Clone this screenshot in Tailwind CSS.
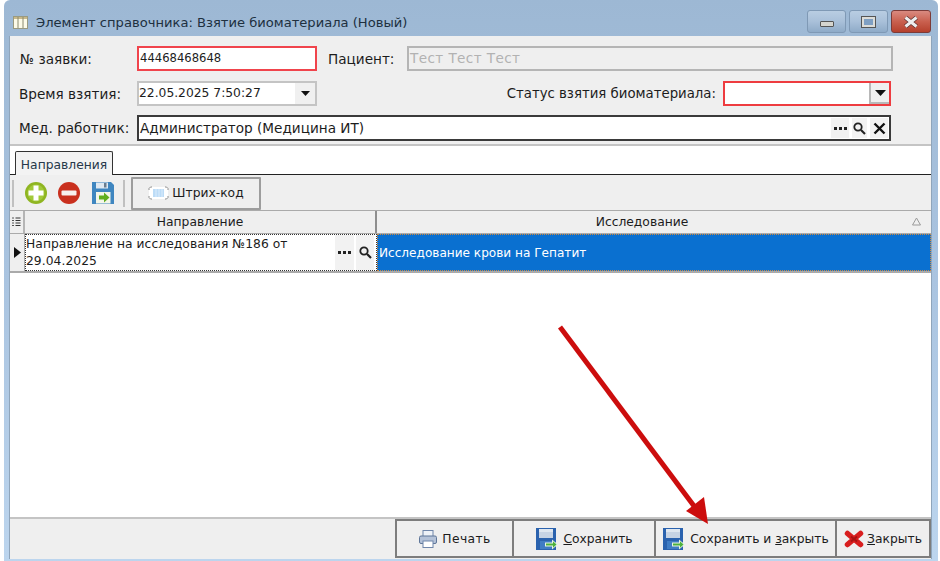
<!DOCTYPE html>
<html lang="en">
<head>
<meta charset="UTF-8">
<title>Взятие биоматериала</title>
<script src="https://cdn.jsdelivr.net/npm/@tailwindcss/browser@4"></script>
</head>
<body class="w-[940px] h-[561px] overflow-hidden bg-white font-['DejaVu_Sans',sans-serif] text-[13.6px] text-[#1c1c1c]">
<div class="relative w-[940px] h-[561px]">
  <div class="absolute left-[4px] top-0 w-[934px] h-[561px] flex flex-col bg-gradient-to-b from-[#9db8d4] via-[#aac4e0] to-[#bcd5ee] pl-[5px] pr-[6px] pb-[2px] rounded-t-[6px]">
    <!-- title bar -->
    <div class="h-[36px] flex shrink-0 items-start justify-between pt-[10px]">
      <div class="flex items-center gap-[8px] pl-[4px] h-[24px]">
        <svg width="15" height="15" viewBox="0 0 15 15"><rect x="0.5" y="1.500" width="14" height="12" fill="#fdfbe8" stroke="#9a9a80"/><rect x="1" y="2" width="13" height="2" fill="#c9b98a"/><path d="M5 2v11M10 2v11" stroke="#8a8a70"/></svg>
        <span class="text-[13.1px] text-[#20303f] pt-[1px]">Элемент справочника: Взятие биоматериала (Новый)</span>
      </div>
      <div class="flex gap-[3px] mr-[1px]">
        <div class="w-[39px] h-[23px] rounded-[3px] border border-[#7f99b5] bg-gradient-to-b from-[#b9cde2] via-[#a9c0d9] to-[#8fabc8] flex items-end justify-center pb-[5px]"><div class="w-[14px] h-[6px] bg-[#d5d5cf] border border-[#555] rounded-[1px]"></div></div>
        <div class="w-[39px] h-[23px] rounded-[3px] border border-[#7f99b5] bg-gradient-to-b from-[#b9cde2] via-[#a9c0d9] to-[#8fabc8] flex items-center justify-center"><div class="w-[13px] h-[10px] bg-[#7f9fc2] border-[2px] border-[#dcdcd8] outline outline-1 outline-[#555]"></div></div>
        <div class="w-[40px] h-[23px] rounded-[3px] border border-[#7c3b38] bg-gradient-to-b from-[#d98a80] via-[#c9604f] to-[#b5402c] flex items-center justify-center">
          <svg width="16" height="12" viewBox="0 0 16 12"><path d="M2.500 1.500L13.500 10.500M13.500 1.500L2.500 10.500" stroke="#5a3030" stroke-width="4.500"/><path d="M2.500 1.500L13.500 10.500M13.500 1.500L2.500 10.500" stroke="#eee" stroke-width="3"/></svg>
        </div>
      </div>
    </div>

    <!-- form -->
    <div class="flex-1 flex flex-col border-l border-r border-[#8fa5bb] min-h-0 bg-white">
      <div class="h-[110px] shrink-0 bg-[#efefef] border-b-[2px] border-[#c4c4c4] pt-[10px] pl-[10px] pr-[38px]">
        <div class="flex items-center h-[25px]">
          <span class="w-[117px] pt-[1px]">№ заявки:</span>
          <div class="w-[180px] h-[25px] bg-white border-[2px] border-[#f0444c] flex items-center pl-[1px] text-[11.600px]">44468468648</div>
          <span class="ml-[11px] w-[79px] pt-[1px]">Пациент:</span>
          <div class="flex-1 h-[25px] bg-[#efefef] border-[2px] border-[#b5b5b5] flex items-center pl-[1px] text-[13.600px] text-[#b2b2b2] tracking-[0.4px]">Тест Тест Тест</div>
        </div>
        <div class="flex items-center h-[25px] mt-[10px]">
          <span class="w-[117px] ml-[-1px] mr-[1px] pt-[1px]">Время взятия:</span>
          <div class="w-[180px] h-[25px] bg-white border-[2px] border-[#c4c4c4] flex items-center justify-between text-[12.300px]">22.05.2025 7:50:27
            <span class="w-[20px] h-[21px] bg-[#f0f0f0] flex items-center justify-center"><svg width="9" height="5" viewBox="0 0 9 5"><path d="M0 0h9L4.500 5z" fill="#111"/></svg></span>
          </div>
          <span class="ml-auto mr-[7px] pt-[1px] text-[13.300px]">Статус взятия биоматериала:</span>
          <div class="w-[168px] h-[25px] bg-white border-[2px] border-[#ee3c40] flex items-center justify-end mr-[2px]">
            <span class="w-[20px] h-[21px] bg-[#efefef] border-l-[2px] border-b-[2px] border-[#b8b8b8] flex items-center justify-center"><svg width="11" height="6" viewBox="0 0 11 6"><path d="M0 0h11L5.500 6z" fill="#111"/></svg></span>
          </div>
        </div>
        <div class="flex items-center h-[26px] mt-[9px]">
          <span class="w-[117px] ml-[-1px] mr-[1px]">Мед. работник:</span>
          <div class="w-[754px] h-[26px] bg-white border-[2px] border-[#3a3a3a] flex items-center justify-between pl-[1px]">Администратор (Медицина ИТ)
            <span class="flex gap-[3px] pr-[1px]">
              <span class="w-[18px] h-[20px] bg-[#f2f2f2] flex items-center justify-center"><svg width="13" height="3" viewBox="0 0 13 3"><path d="M0 0h3v3H0zM5 0h3v3H5zM10 0h3v3h-3z" fill="#222"/></svg></span>
              <span class="w-[15px] h-[20px] bg-[#f2f2f2] flex items-center justify-center"><svg width="13" height="13" viewBox="0 0 13 13"><circle cx="5" cy="5" r="3.700" fill="none" stroke="#222" stroke-width="1.800"/><path d="M8 8l4 4" stroke="#222" stroke-width="2.200"/></svg></span>
              <span class="w-[18px] h-[20px] bg-[#f2f2f2] flex items-center justify-center"><svg width="13" height="13" viewBox="0 0 13 13"><path d="M1.500 1.500l10 10M11.500 1.500l-10 10" stroke="#111" stroke-width="2.400"/></svg></span>
            </span>
          </div>
        </div>
      </div>

      <!-- tab strip -->
      <div class="h-[29px] shrink-0 bg-white border-b border-[#222] flex items-end pl-[5px]">
        <div class="w-[98px] h-[24px] mb-[-1px] pt-[3px] bg-[#f3f3f3] border border-b-0 border-[#333] rounded-t-[2px] text-[12.300px] text-[#26384a] flex items-center justify-center">Направления</div>
      </div>

      <!-- toolbar -->
      <div class="h-[35px] shrink-0 bg-[#efefef] flex items-center pl-[2px] pt-[1px]">
        <div class="w-[2px] h-[27px] bg-[#c0c0c0]"></div>
        <svg class="ml-[10px]" width="24" height="24" viewBox="0 0 24 24"><circle cx="12" cy="12" r="11" fill="#8fb521"/><circle cx="12" cy="12" r="8.500" fill="#a2c93a"/><path d="M9.500 4.500h5v5h5v5h-5v5h-5v-5h-5v-5h5z" fill="#fff"/></svg>
        <svg class="ml-[9px]" width="24" height="24" viewBox="0 0 24 24"><circle cx="12" cy="12" r="11" fill="#c9301e"/><rect x="4.500" y="9.500" width="15" height="5" rx="1" fill="#f7f0ee"/></svg>
        <svg class="ml-[10px]" width="24" height="24" viewBox="0 0 24 24"><path d="M1 1h19l3 3v19H1z" fill="#3f86c0"/><path d="M5 1.500h12v6H5z" fill="#dfe9f2"/><rect x="13" y="2" width="2.500" height="4.500" fill="#6a7d8f"/><path d="M5 11h14.500v11.500H5z" fill="#f4f6e8"/><path d="M8 14.500h5v-3l5.500 5-5.500 5v-3H8z" fill="#5fae1f"/></svg>
        <div class="ml-[8px] w-[2px] h-[27px] bg-[#c0c0c0]"></div>
        <div class="ml-[6px] w-[130px] h-[33px] border-[2px] border-[#9d9d9d] rounded-[1px] bg-[#efefef] flex items-center justify-center gap-[3px] text-[12.300px]">
          <svg width="21" height="14" viewBox="0 0 21 14"><rect x="1" y="1" width="19" height="12" rx="2" fill="#fff"/><rect x="5" y="3" width="11" height="8" fill="#bcdcf7"/><path d="M8 3v8M11 3v8M14 3v8" stroke="#dcecfb"/><path d="M1 4V2.500L2.500 1H4M17 1h1.500L20 2.500V4M20 10v1.500L18.500 13H17M4 13H2.500L1 11.500V10" fill="none" stroke="#8c8c8c"/></svg>
          Штрих-код
        </div>
      </div>

      <!-- grid -->
      <div class="flex-1 min-h-0 flex flex-col bg-white">
        <div class="h-[24px] shrink-0 flex bg-[#efefef] border-y-[1.500px] border-[#aaaaaa] text-[12.300px]">
          <div class="w-[15px] border-r-[2px] border-[#b5b5b5] flex items-center justify-center"><svg width="9" height="11" viewBox="0 0 9 11"><path d="M0 1h2M0 3.500h2M0 6h2M0 8.500h2" stroke="#555"/><path d="M3.500 1h5M3.500 3.500h5M3.500 6h5M3.500 8.500h5" stroke="#333"/></svg></div>
          <div class="w-[352px] border-r-[2px] border-[#8e8e8e] flex items-center justify-center pt-[1px]">Направление</div>
          <div class="relative flex-1 flex items-center justify-center pr-[24px] pt-[1px]">Исследование
            <svg class="absolute right-[10px] top-[6px]" width="9" height="9" viewBox="0 0 9 9"><path d="M4.500 1L8.500 8H.5z" fill="none" stroke="#9a9a9a"/></svg>
          </div>
        </div>
        <div class="h-[39px] shrink-0 flex border-b-[2px] border-[#aaaaaa] text-[12.300px]">
          <div class="w-[15px] bg-[#efefef] border-r border-[#aaa] flex items-center justify-center"><svg width="7" height="11" viewBox="0 0 7 11"><path d="M0 0l7 5.500L0 11z" fill="#111"/></svg></div>
          <div class="w-[352px] border border-dotted border-[#333] flex items-center justify-between">
            <span class="leading-[17px] w-[310px] tracking-[0.05px]">Направление на исследования №186 от 29.04.2025</span>
            <span class="flex gap-[2px] shrink-0 h-[35px] mr-[2px]">
              <span class="w-[19px] bg-[#f2f2f2] flex items-center justify-center"><svg width="13" height="3" viewBox="0 0 13 3"><path d="M0 0h3v3H0zM5 0h3v3H5zM10 0h3v3h-3z" fill="#222"/></svg></span>
              <span class="w-[18px] bg-[#f2f2f2] flex items-center justify-center"><svg width="13" height="13" viewBox="0 0 13 13"><circle cx="5" cy="5" r="3.700" fill="none" stroke="#222" stroke-width="1.800"/><path d="M8 8l4 4" stroke="#222" stroke-width="2.200"/></svg></span>
            </span>
          </div>
          <div class="flex-1 bg-[#0a70d0] border border-dotted border-[#d08a40] text-white flex items-center pl-[1px] pt-[1px] text-[12.100px]">Исследование крови на Гепатит</div>
        </div>
        <div class="flex-1"></div>
      </div>

      <!-- bottom bar -->
      <div class="h-[42px] shrink-0 bg-[#efefef] border-t-[2px] border-[#c4c4c4] flex justify-end text-[12.300px] pb-[1px]">
        <div class="w-[119px] border-[2px] border-[#7d7d7d] flex items-center justify-center gap-[4px] pt-[1px]">
          <svg width="20" height="20" viewBox="0 0 20 20"><rect x="5" y="1.500" width="10" height="6" fill="#eef2f8" stroke="#6f86aa"/><rect x="1.500" y="7" width="17" height="7.500" rx="1.500" fill="#b4c2d8" stroke="#5f7699"/><rect x="5" y="12" width="10" height="6.500" fill="#fff" stroke="#6f86aa"/></svg>
          <span class="tracking-[0.4px]">Печать</span>
        </div>
        <div class="w-[142px] border-[2px] border-l-0 border-[#7d7d7d] flex items-center justify-center gap-[4px] pt-[1px]">
          <svg width="24" height="24" viewBox="0 0 24 24"><path d="M1 1h20v22H1z" fill="#2a62ae"/><path d="M4 2h14v9H4z" fill="#c6d3e4"/><path d="M4 2h14v3H4z" fill="#dfe7f0"/><path d="M5 14h12v8H5z" fill="#3f7cc4"/><path d="M10 15.500h7v-3l6 5-6 5v-3h-7z" fill="#e8f4e2"/><path d="M11 16.500h7v-2.300l3.500 3.300-3.500 3.300v-2.300h-7z" fill="#4cb03c"/></svg>
          <span><u>С</u>охранить</span>
        </div>
        <div class="w-[181px] border-[2px] border-l-0 border-[#7d7d7d] flex items-center justify-center gap-[4px] pt-[1px]">
          <svg width="24" height="24" viewBox="0 0 24 24"><path d="M1 1h20v22H1z" fill="#2a62ae"/><path d="M4 2h14v9H4z" fill="#c6d3e4"/><path d="M4 2h14v3H4z" fill="#dfe7f0"/><path d="M5 14h12v8H5z" fill="#3f7cc4"/><path d="M10 15.500h7v-3l6 5-6 5v-3h-7z" fill="#e8f4e2"/><path d="M11 16.500h7v-2.300l3.500 3.300-3.500 3.300v-2.300h-7z" fill="#4cb03c"/></svg>
          <span>Сохранить и <u>з</u>акрыть</span>
        </div>
        <div class="w-[94px] border-[2px] border-l-0 border-[#7d7d7d] flex items-center justify-center gap-[3px] pt-[1px]">
          <svg width="20" height="18" viewBox="0 0 20 18"><path d="M3.500 3.500l13 11M16.500 3.500l-13 11" stroke="#d81e1e" stroke-width="5.500" stroke-linecap="round"/><path d="M7 6.500l6 5M13 6.500l-6 5" stroke="#a81414" stroke-width="2"/></svg>
          <span><u>З</u>акрыть</span>
        </div>
      </div>
    </div>
  </div>

  <!-- annotation arrow -->
  <svg class="absolute left-0 top-0 pointer-events-none" width="940" height="561" viewBox="0 0 940 561">
    <path d="M560 327L697 510" stroke="#cc0d0d" stroke-width="5"/>
    <path d="M708 524L686 511L704 497z" fill="#cc0d0d"/>
  </svg>
</div>
</body>
</html>
